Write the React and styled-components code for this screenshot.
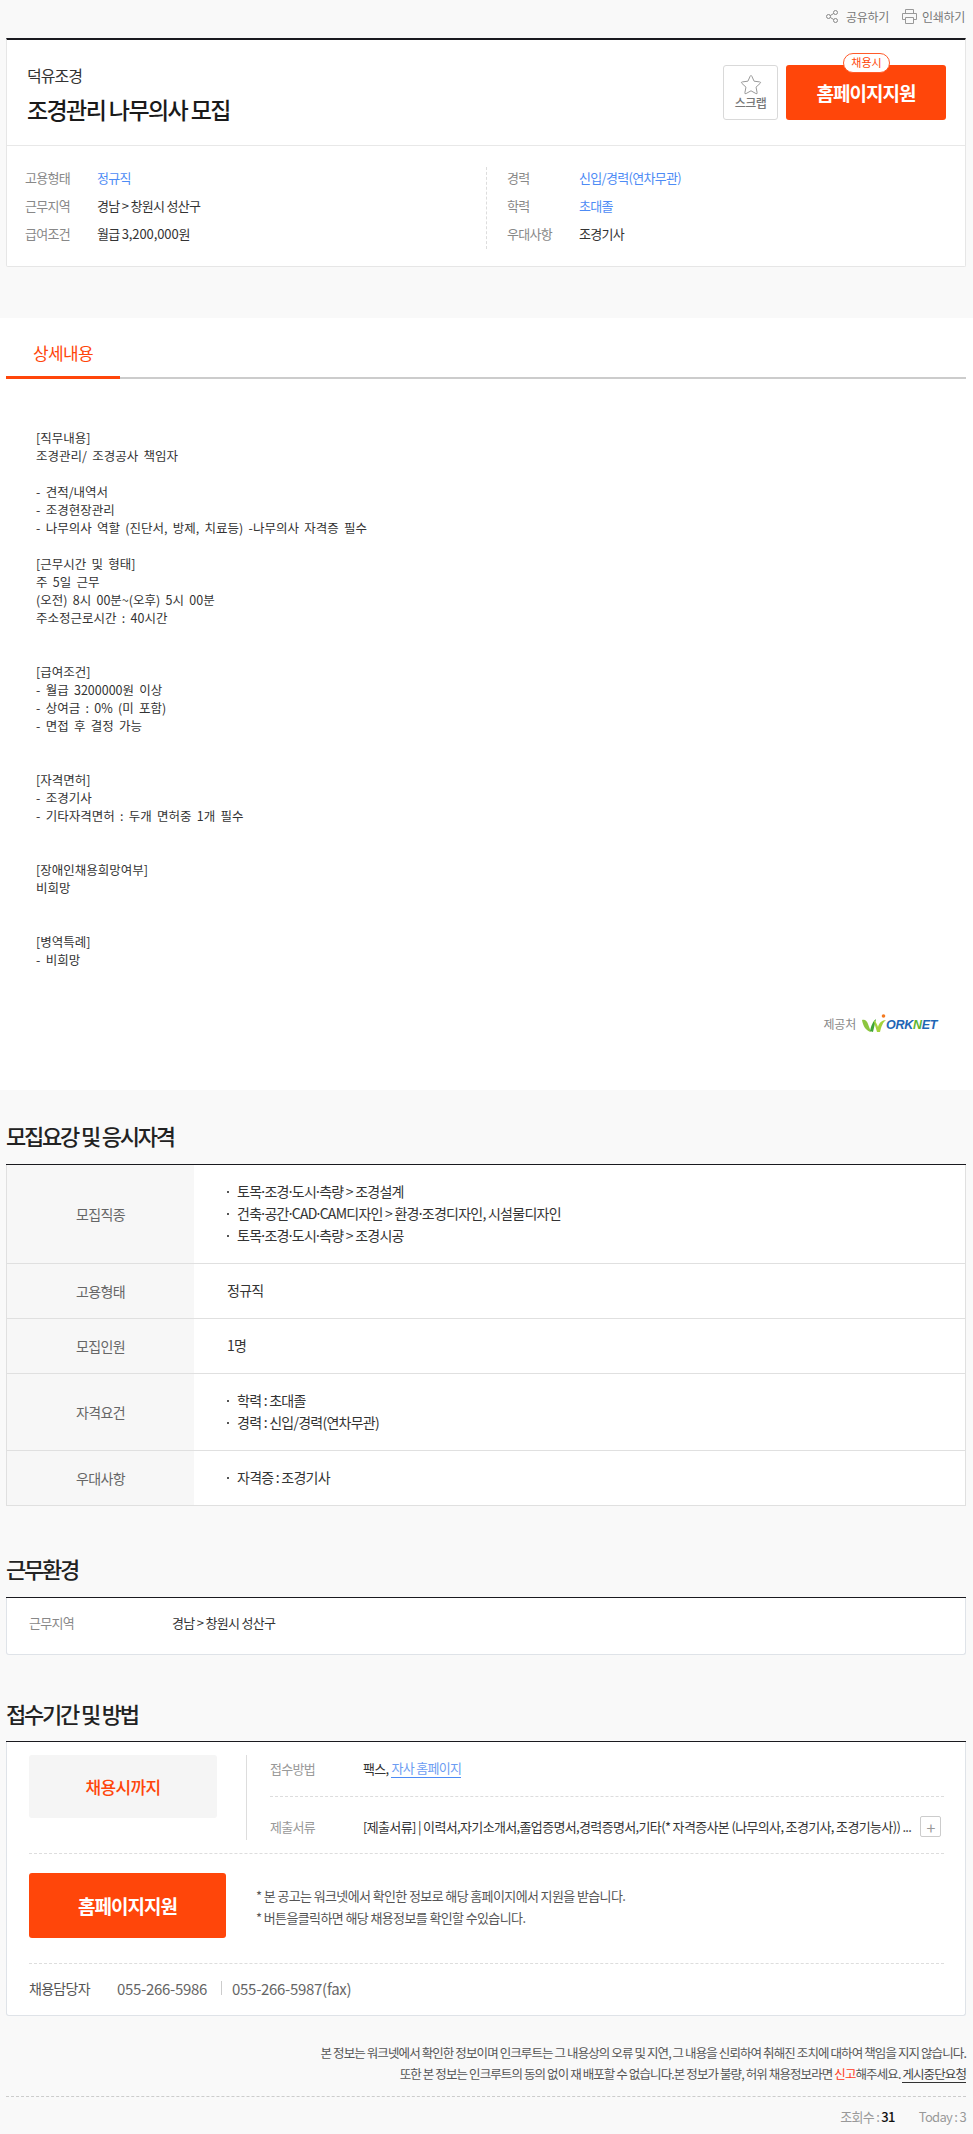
import React from "react";
import styled, { createGlobalStyle } from "styled-components";

const GlobalStyle = createGlobalStyle`
  html, body { margin: 0; padding: 0; background: #f9f9f9; }
  body {
    width: 973px;
    font-family: "Noto Sans CJK KR", "Noto Sans", sans-serif;
    color: #222;
  }
  * { box-sizing: border-box; }
`;

const Page = styled.div`
  width: 973px;
  height: 2134px;
  overflow: hidden;
`;
const Inner = styled.div`
  width: 960px;
  margin-left: 6px;
`;
const TopBar = styled.div`
  height: 38px;
  padding: 6px 1px 0 0;
  display: flex;
  justify-content: flex-end;
  gap: 13px;
`;
const TopLink = styled.a`
  display: flex;
  align-items: center;
  height: 20px;
  gap: ${(p) => p.$gap || 5}px;
  font-size: 12px;
  letter-spacing: -0.3px;
  color: #777;
`;

const Card = styled.div`
  height: 229px;
  background: #fff;
  border: 1px solid #e6e6e6;
  border-top: 2px solid #1a1a1f;
  border-radius: 0 0 2px 2px;
`;
const CardHead = styled.div`
  height: 106px;
  padding: 24px 19px 0 20px;
  border-bottom: 1px solid #e8e8e8;
  display: flex;
  justify-content: space-between;
`;
const Company = styled.div`
  font-size: 16px;
  line-height: 22px;
  letter-spacing: -1px;
  color: #333;
`;
const JobTitle = styled.h1`
  margin: 7px 0 0;
  font-size: 23px;
  line-height: 32px;
  font-weight: 500;
  letter-spacing: -1.6px;
  color: #1a1a1a;
`;
const Actions = styled.div`
  display: flex;
  gap: 8px;
  padding-top: 1px;
`;
const Scrap = styled.div`
  width: 55px;
  height: 55px;
  border: 1px solid #d9d9d9;
  border-radius: 3px;
  display: flex;
  flex-direction: column;
  align-items: center;
  padding-top: 7px;
  font-size: 12px;
  line-height: 14px;
  letter-spacing: -0.5px;
  color: #777;
  font-weight: 500;
`;
const ApplyButton = styled.div`
  position: relative;
  flex: none;
  width: ${(p) => p.$w}px;
  height: ${(p) => p.$h}px;
  background: #ff460a;
  border-radius: 3px;
  color: #fff;
  font-weight: 700;
  font-size: 19px;
  letter-spacing: -1px;
  display: flex;
  align-items: center;
  justify-content: center;
`;
const Badge = styled.span`
  position: absolute;
  left: 57px;
  top: -12px;
  width: 47px;
  height: 20px;
  background: #fff;
  border: 1px solid #ff5a2a;
  border-radius: 10px;
  color: #ff460a;
  font-size: 11px;
  font-weight: 400;
  line-height: 17px;
  letter-spacing: 0;
  text-align: center;
`;
const InfoGrid = styled.div`
  display: flex;
  padding: 21px 0 0 18px;
`;
const InfoCol = styled.div`
  width: ${(p) => p.$w}px;
  height: 82px;
  padding-left: ${(p) => p.$pad || 0}px;
  border-left: ${(p) => (p.$pad ? "1px dashed #ddd" : "none")};
`;
const InfoRow = styled.div`
  display: flex;
  height: 28px;
  font-size: 13px;
  line-height: 22px;
  letter-spacing: -0.7px;
`;
const InfoLabel = styled.span`
  width: 72px;
  color: #888;
`;
const InfoValue = styled.span`
  color: ${(p) => (p.$blue ? "#4d8bf5" : "#333")};
`;
const Digits = styled.span`
  letter-spacing: -0.1px;
`;

const DetailSection = styled.div`
  margin-top: 51px;
  height: 772px;
  background: #fff;
`;
const Tabs = styled.div`
  height: 61px;
  border-bottom: 2px solid #ccc;
`;
const Tab = styled.div`
  width: 114px;
  height: 61px;
  padding-top: 23px;
  border-bottom: 3px solid #ff460a;
  text-align: center;
  font-size: 17px;
  line-height: 24px;
  letter-spacing: -0.6px;
  color: #ff460a;
`;
const DetailText = styled.pre`
  margin: 0;
  padding: 50px 0 0 30px;
  height: 635px;
  font-family: "Noto Sans CJK KR", sans-serif;
  font-size: 12.5px;
  line-height: 18px;
  word-spacing: 2.5px;
  color: #333;
  white-space: pre;
`;
const Provider = styled.div`
  display: flex;
  align-items: center;
  justify-content: flex-end;
  padding-right: 30px;
  gap: 6px;
  font-size: 12px;
  letter-spacing: -0.2px;
  color: #888;
`;
const Logo = styled.div`
  position: relative;
  width: 74px;
  height: 19px;
`;
const LogoText = styled.span`
  position: absolute;
  left: 24px;
  top: 4px;
  font-family: "Liberation Sans", sans-serif;
  font-style: italic;
  font-weight: 700;
  font-size: 12.5px;
  line-height: 14px;
  letter-spacing: -0.3px;
  color: #1f66b5;
  em { color: #5cb531; }
`;

const SectionTitle = styled.h2`
  margin: 0;
  padding-top: ${(p) => p.$top}px;
  height: ${(p) => p.$h}px;
  font-size: 22px;
  line-height: 30px;
  font-weight: 500;
  letter-spacing: -2.2px;
  color: #222;
  border-bottom: 1px solid #1a1a1f;
`;
const Table = styled.div`
  border: 1px solid #e0e0e0;
  border-top: none;
  background: #fff;
`;
const Row = styled.div`
  display: flex;
  height: ${(p) => p.$h}px;
  border-bottom: 1px solid #e0e0e0;
  &:last-child { border-bottom: none; }
`;
const Th = styled.div`
  width: 187px;
  background: #f7f7f7;
  display: flex;
  align-items: center;
  justify-content: center;
  font-size: 14px;
  letter-spacing: -0.6px;
  color: #666;
`;
const Td = styled.div`
  flex: 1;
  padding: 0 0 2px 33px;
  display: flex;
  flex-direction: column;
  justify-content: center;
  font-size: 14px;
  line-height: 22px;
  letter-spacing: -0.75px;
  color: #333;
`;
const Bullet = styled.div`
  position: relative;
  padding-left: 10px;
  &::before {
    content: "";
    position: absolute;
    left: 0;
    top: 11px;
    width: 2px;
    height: 2px;
    background: #555;
  }
`;
const Dot = styled.span`
  margin: 0 -2px;
`;

const WorkBox = styled.div`
  height: 57px;
  padding: 0 0 8px 22px;
  display: flex;
  align-items: center;
  font-size: 13px;
  letter-spacing: -0.7px;
  color: #333;
  background: #fff;
  border: 1px solid #dfe3e8;
  border-top: none;
  border-radius: 0 0 3px 3px;
`;
const WorkLabel = styled.span`
  width: 143px;
  color: #888;
`;

const ApplyBox = styled.div`
  height: 274px;
  padding: 13px 21px 0 22px;
  background: #fff;
  border: 1px solid #dfe3e8;
  border-top: none;
  border-radius: 0 0 3px 3px;
`;
const ApplyTop = styled.div`
  display: flex;
  height: 99px;
  border-bottom: 1px dashed #ddd;
`;
const Period = styled.div`
  width: 188px;
  height: 63px;
  background: #f5f5f5;
  border-radius: 3px;
  display: flex;
  align-items: center;
  justify-content: center;
  font-size: 17px;
  font-weight: 500;
  letter-spacing: -0.6px;
  color: #ff460a;
`;
const Method = styled.div`
  flex: 1;
  height: 85px;
  margin-left: 29px;
  padding-left: 23px;
  border-left: 1px solid #ddd;
`;
const MethodRow = styled.div`
  display: flex;
  align-items: center;
  height: ${(p) => p.$h}px;
  padding-top: ${(p) => p.$top || 0}px;
  padding-bottom: ${(p) => p.$bottom || 0}px;
  border-bottom: ${(p) => (p.$line ? "1px dashed #ddd" : "none")};
  font-size: 13px;
  letter-spacing: -0.7px;
  color: #333;
`;
const MethodLabel = styled.span`
  width: 93px;
  flex: none;
  color: #999;
`;
const MethodLink = styled.span`
  margin-left: 3px;
  height: 20px;
  line-height: 19px;
  color: #6c9cf2;
  border-bottom: 1px solid #4d8bf5;
`;
const Docs = styled.span`
  flex: 1;
  font-size: 13px;
  letter-spacing: -0.65px;
  white-space: nowrap;
`;
const PlusBtn = styled.span`
  flex: none;
  width: 21px;
  height: 21px;
  margin-right: 3px;
  border: 1px solid #ccc;
  border-radius: 2px;
  display: flex;
  align-items: center;
  justify-content: center;
  color: #999;
  font-size: 16px;
  line-height: 1;
`;
const ApplyMid = styled.div`
  display: flex;
  align-items: flex-start;
  height: 110px;
  padding-top: 19px;
  border-bottom: 1px dashed #ddd;
`;
const Notes = styled.div`
  margin: 12px 0 0 30px;
  font-size: 13px;
  line-height: 22px;
  letter-spacing: -0.62px;
  color: #555;
`;
const Contact = styled.div`
  display: flex;
  align-items: center;
  height: 50px;
  padding-bottom: 2px;
  font-size: 14px;
  letter-spacing: -0.7px;
  color: #555;
`;
const ContactLabel = styled.span`
  width: 88px;
`;
const Phone = styled.span`
  color: #666;
  font-size: 15px;
  letter-spacing: -0.3px;
`;
const Sep = styled.span`
  width: 1px;
  height: 14px;
  margin: 0 10px 0 14px;
  background: #ccc;
`;

const Disclaimer = styled.div`
  margin-top: 26px;
  text-align: right;
  font-size: 12.5px;
  line-height: 21px;
  letter-spacing: -0.9px;
  color: #555;
`;
const Red = styled.span`
  color: #ff3b1a;
`;
const StopLink = styled.span`
  display: inline-block;
  height: 20px;
  color: #444;
  border-bottom: 1px solid #333;
`;
const Counter = styled.div`
  margin-top: 12px;
  padding-top: 10px;
  border-top: 1px dashed #ccc;
  display: flex;
  justify-content: flex-end;
  gap: 24px;
  font-size: 13px;
  line-height: 20px;
  letter-spacing: -0.7px;
  color: #999;
  b { font-weight: 500; color: #111; }
`;

const detail = `[직무내용]
조경관리/ 조경공사 책임자

- 견적/내역서
- 조경현장관리
- 나무의사 역할 (진단서, 방제, 치료등) -나무의사 자격증 필수

[근무시간 및 형태]
주 5일 근무
(오전) 8시 00분~(오후) 5시 00분
주소정근로시간 : 40시간


[급여조건]
- 월급 3200000원 이상
- 상여금 : 0% (미 포함)
- 면접 후 결정 가능


[자격면허]
- 조경기사
- 기타자격면허 : 두개 면허중 1개 필수


[장애인채용희망여부]
비희망


[병역특례]
- 비희망`;

const ShareIcon = () => (
  <svg width="12" height="13" viewBox="0 0 12 13" fill="none" stroke="#888" strokeWidth="1">
    <circle cx="2.5" cy="6.5" r="2" />
    <circle cx="9.5" cy="2.5" r="2" />
    <circle cx="9.5" cy="10.5" r="2" />
    <path d="M4.3 5.5 7.7 3.5M4.3 7.5l3.4 2" />
  </svg>
);
const PrintIcon = () => (
  <svg width="15" height="15" viewBox="0 0 15 15" fill="none" stroke="#999" strokeWidth="1">
    <path d="M3.5 4.5v-4h8v4M3.5 10.5H.5v-6h14v6h-3" />
    <path d="M3.5 8.5h8v6h-8z" />
  </svg>
);
const StarIcon = () => (
  <svg width="22" height="23" viewBox="0 0 22 22" fill="none" stroke="#999" strokeWidth="1">
    <path d="M10.2 2.7Q11 1 11.8 2.7L14.1 7.7 19.6 8.4Q21.46 8.6 20.1 9.9L16.04 13.64 17.1 19.1Q17.47 20.9 15.85 20L11 17.3 6.15 20Q4.53 20.9 4.9 19.1L5.96 13.64 1.9 9.9Q.54 8.6 2.4 8.4L7.9 7.7z" />
  </svg>
);
const WorknetMark = () => (
  <svg width="26" height="19" viewBox="0 0 26 19" style={{ position: "absolute", left: 0, top: 0 }}>
    <path d="M0 6c3-1 5 1 6 4l3 8C4 17 1 12 0 6z" fill="#8cc63f" />
    <path d="M8 17c1-5 3-10 6-12-1 4-2 9-3 13z" fill="#3fa535" />
    <path d="M12 8l3 10h3c1-5 3-10 6-12-4 0-7 3-8 7-1-3-2-5-4-7z" fill="#a5d23c" />
    <circle cx="21.5" cy="2" r="1.8" fill="#f47a20" />
  </svg>
);

const App = () => {
  return (
    <Page>
      <GlobalStyle />
      <Inner>
        <TopBar>
          <TopLink $gap={8}><ShareIcon />공유하기</TopLink>
          <TopLink><PrintIcon />인쇄하기</TopLink>
        </TopBar>
        <Card>
          <CardHead>
            <div>
              <Company>덕유조경</Company>
              <JobTitle>조경관리 나무의사 모집</JobTitle>
            </div>
            <Actions>
              <Scrap><StarIcon />스크랩</Scrap>
              <ApplyButton $w={160} $h={55}>
                <Badge>채용시</Badge>
                홈페이지지원
              </ApplyButton>
            </Actions>
          </CardHead>
          <InfoGrid>
            <InfoCol $w={461}>
              <InfoRow><InfoLabel>고용형태</InfoLabel><InfoValue $blue>정규직</InfoValue></InfoRow>
              <InfoRow><InfoLabel>근무지역</InfoLabel><InfoValue>경남 &gt; 창원시 성산구</InfoValue></InfoRow>
              <InfoRow><InfoLabel>급여조건</InfoLabel><InfoValue>월급 <Digits>3,200,000</Digits>원</InfoValue></InfoRow>
            </InfoCol>
            <InfoCol $w={400} $pad={20}>
              <InfoRow><InfoLabel>경력</InfoLabel><InfoValue $blue>신입/경력(연차무관)</InfoValue></InfoRow>
              <InfoRow><InfoLabel>학력</InfoLabel><InfoValue $blue>초대졸</InfoValue></InfoRow>
              <InfoRow><InfoLabel>우대사항</InfoLabel><InfoValue>조경기사</InfoValue></InfoRow>
            </InfoCol>
          </InfoGrid>
        </Card>
      </Inner>

      <DetailSection>
        <Inner>
          <Tabs><Tab>상세내용</Tab></Tabs>
          <DetailText>{detail}</DetailText>
          <Provider>
            제공처
            <Logo>
              <WorknetMark />
              <LogoText>ORK<em>N</em>ET</LogoText>
            </Logo>
          </Provider>
        </Inner>
      </DetailSection>

      <Inner>
        <SectionTitle $top={30} $h={75}>모집요강 및 응시자격</SectionTitle>
        <Table>
          <Row $h={99}>
            <Th>모집직종</Th>
            <Td>
              <Bullet>토목<Dot>·</Dot>조경<Dot>·</Dot>도시<Dot>·</Dot>측량 &gt; 조경설계</Bullet>
              <Bullet>건축<Dot>·</Dot>공간<Dot>·</Dot>CAD<Dot>·</Dot>CAM디자인 &gt; 환경<Dot>·</Dot>조경디자인, 시설물디자인</Bullet>
              <Bullet>토목<Dot>·</Dot>조경<Dot>·</Dot>도시<Dot>·</Dot>측량 &gt; 조경시공</Bullet>
            </Td>
          </Row>
          <Row $h={55}><Th>고용형태</Th><Td>정규직</Td></Row>
          <Row $h={55}><Th>모집인원</Th><Td>1명</Td></Row>
          <Row $h={77}>
            <Th>자격요건</Th>
            <Td>
              <Bullet>학력 : 초대졸</Bullet>
              <Bullet>경력 : 신입/경력(연차무관)</Bullet>
            </Td>
          </Row>
          <Row $h={54}>
            <Th>우대사항</Th>
            <Td><Bullet>자격증 : 조경기사</Bullet></Td>
          </Row>
        </Table>

        <SectionTitle $top={47} $h={92}>근무환경</SectionTitle>
        <WorkBox>
          <WorkLabel>근무지역</WorkLabel>
          경남 &gt; 창원시 성산구
        </WorkBox>

        <SectionTitle $top={43} $h={87}>접수기간 및 방법</SectionTitle>
        <ApplyBox>
          <ApplyTop>
            <Period>채용시까지</Period>
            <Method>
              <MethodRow $h={42} $bottom={15} $line>
                <MethodLabel>접수방법</MethodLabel>
                팩스, <MethodLink>자사 홈페이지</MethodLink>
              </MethodRow>
              <MethodRow $h={42} $top={17}>
                <MethodLabel>제출서류</MethodLabel>
                <Docs>[제출서류] | 이력서,자기소개서,졸업증명서,경력증명서,기타(* 자격증사본 (나무의사, 조경기사, 조경기능사)) ...</Docs>
                <PlusBtn>+</PlusBtn>
              </MethodRow>
            </Method>
          </ApplyTop>
          <ApplyMid>
            <ApplyButton $w={197} $h={65}>홈페이지지원</ApplyButton>
            <Notes>
              <div>* 본 공고는 워크넷에서 확인한 정보로 해당 홈페이지에서 지원을 받습니다.</div>
              <div>* 버튼을클릭하면 해당 채용정보를 확인할 수있습니다.</div>
            </Notes>
          </ApplyMid>
          <Contact>
            <ContactLabel>채용담당자</ContactLabel>
            <Phone>055-266-5986</Phone>
            <Sep />
            <Phone>055-266-5987(fax)</Phone>
          </Contact>
        </ApplyBox>

        <Disclaimer>
          <div>본 정보는 워크넷에서 확인한 정보이며 인크루트는 그 내용상의 오류 및 지연, 그 내용을 신뢰하여 취해진 조치에 대하여 책임을 지지 않습니다.</div>
          <div>또한 본 정보는 인크루트의 동의 없이 재 배포할 수 없습니다.본 정보가 불량, 허위 채용정보라면 <Red>신고</Red>해주세요. <StopLink>게시중단요청</StopLink></div>
        </Disclaimer>
        <Counter>
          <span>조회수 : <b>31</b></span>
          <span>Today : 3</span>
        </Counter>
      </Inner>
    </Page>
  );
};

export default App;
